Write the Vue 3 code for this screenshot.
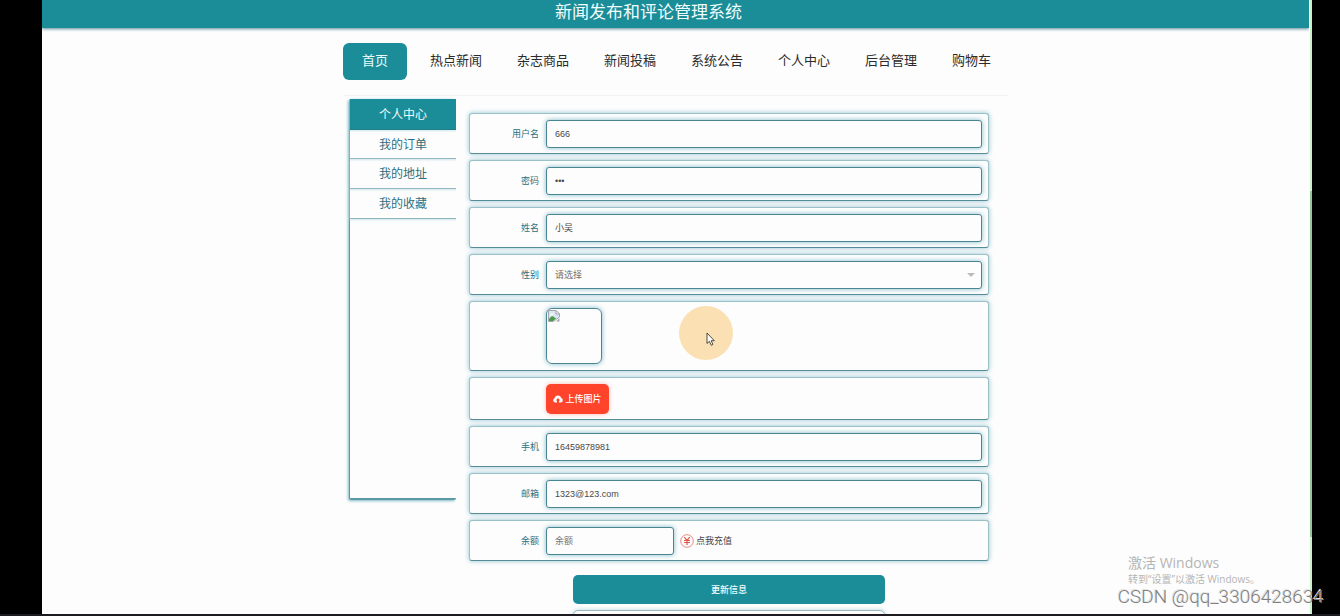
<script setup>
import { ref } from 'vue'

const navItems = ['首页', '热点新闻', '杂志商品', '新闻投稿', '系统公告', '个人中心', '后台管理', '购物车']
const sideItems = ['个人中心', '我的订单', '我的地址', '我的收藏']

const username = ref('666')
const password = ref('666')
const realName = ref('小吴')
const gender = ref('')
const phone = ref('16459878981')
const email = ref('1323@123.com')
const balance = ref('')
</script>

<template>
  <div class="screen">
    <div class="page">
      <div class="content">
        <header class="banner"><h1>新闻发布和评论管理系统</h1></header>

        <div class="container">
          <nav class="nav">
            <a v-for="(item, i) in navItems" :key="item" href="#" :class="{ active: i === 0 }">{{ item }}</a>
          </nav>

          <div class="main">
            <aside class="side">
              <a v-for="(item, i) in sideItems" :key="item" href="#" :class="{ active: i === 0 }">{{ item }}</a>
            </aside>

            <form class="form" @submit.prevent>
              <div class="row">
                <label for="username">用户名</label>
                <input id="username" v-model="username" class="field" type="text" />
              </div>
              <div class="row">
                <label for="password">密码</label>
                <input id="password" v-model="password" class="field" type="password" />
              </div>
              <div class="row">
                <label for="name">姓名</label>
                <input id="name" v-model="realName" class="field" type="text" />
              </div>
              <div class="row">
                <label for="gender">性别</label>
                <div class="select">
                  <select id="gender" v-model="gender" class="field">
                    <option value="">请选择</option>
                    <option value="男">男</option>
                    <option value="女">女</option>
                  </select>
                  <i class="caret"></i>
                </div>
              </div>
              <div class="row indent avatar-row">
                <div class="avatar">
                  <svg width="12" height="12" viewBox="0 0 12 12">
                    <path d="M.5.5h7.5l3.500 3.500v3L8 9.500 5.500 11.500H.5z" fill="#dbe6f5" stroke="#a3a8ad" />
                    <path d="M8 .5v3.500h3.500z" fill="#fff" stroke="#a3a8ad" />
                    <path d="M1 11V9q2.500-4 5-2l2 1.500L5 11z" fill="#4e9a4a" />
                    <path d="M2 5q0-1.500 1.500-1.500Q5 2.500 5.500 4.500V5z" fill="#fff" />
                    <path d="M11.500 8v3.500H8z" fill="#a3a8ad" />
                  </svg>
                </div>
                <div class="pointer">
                  <svg width="9" height="15" viewBox="0 0 9 15">
                    <path d="M1 1v10.500l2.400-2.200 1.800 4 1.700-.8-1.700-3.800H8.300z" fill="#fff" stroke="#3b352e" stroke-width=".9" />
                  </svg>
                </div>
              </div>
              <div class="row indent upload-row">
                <button type="button" class="upload">
                  <svg width="10" height="8" viewBox="0 0 20 16">
                    <path d="M4.500 15A4.500 4.500 0 0 1 3 6.500 7 7 0 0 1 16.500 5.800 4.800 4.800 0 0 1 15.500 15H12V11h2.500L10 6 5.500 11H8v4z" fill="#fff" />
                  </svg>
                  上传图片
                </button>
              </div>
              <div class="row">
                <label for="phone">手机</label>
                <input id="phone" v-model="phone" class="field" type="text" />
              </div>
              <div class="row">
                <label for="email">邮箱</label>
                <input id="email" v-model="email" class="field" type="text" />
              </div>
              <div class="row">
                <label for="balance">余额</label>
                <input id="balance" v-model="balance" class="field short" type="text" placeholder="余额" />
                <a href="#" class="recharge">
                  <svg width="14" height="14" viewBox="0 0 14 14" fill="none" stroke="#e2574c">
                    <circle cx="7" cy="7" r="6.300" stroke-width=".7" />
                    <path d="M4.300 3.200 7 6.500l2.700-3.300M4 6.500h6M4 8.500h6M7 6.500V11" stroke-width="1.200" />
                  </svg>
                  <span>点我充值</span>
                </a>
              </div>
              <div class="actions">
                <button type="submit" class="primary">更新信息</button>
                <div class="next-panel"></div>
              </div>
            </form>
          </div>
        </div>
      </div>
      <div class="scroll"><div class="thumb"></div></div>
    </div>
    <div class="taskbar"></div>

    <div class="activate">
      <p class="big">激活 Windows</p>
      <p class="small">转到“设置”以激活 Windows。</p>
    </div>
    <div class="mark">CSDN @qq_3306428634</div>
  </div>
</template>

<style>
body {
  overflow: hidden;
}
</style>

<style scoped>
* {
  box-sizing: border-box;
}
.screen {
  position: relative;
  display: flex;
  flex-direction: column;
  height: 100vh;
  overflow: hidden;
  background: #000;
  font-family: "Liberation Sans", "Noto Sans CJK SC", sans-serif;
}
.page {
  flex: 1;
  min-height: 0;
  display: flex;
  margin: 0 28px 0 42px;
  background: #fdfdfd;
}
.content {
  flex: 1;
  min-width: 0;
  overflow: hidden;
}
.scroll {
  width: 3px;
  padding-top: 191px;
  background: linear-gradient(90deg, #fdfdfd 1px, #c9f2cb 1px);
}
.thumb {
  height: 346px;
  margin-left: 1px;
  background: #93c796;
}
.taskbar {
  height: 2px;
  background: #1d1b1f;
}
a {
  text-decoration: none;
}
.banner {
  height: 28px;
  padding-right: 54px;
  background: #1b8d99;
  box-shadow: 0 1px 3px #5b8a9a;
  text-align: center;
}
h1 {
  margin: 0;
  font-size: 17px;
  line-height: 26px;
  font-weight: 400;
  color: #effcfd;
}
.container {
  max-width: 665px;
  margin: 0 auto;
}
.nav {
  display: flex;
  gap: 11px;
  padding: 15px 0;
  border-bottom: 1px solid #f3f3f4;
}
.nav a {
  height: 37px;
  padding: 0 12px;
  font-size: 13px;
  line-height: 35px;
  color: #2b2b2b;
  white-space: nowrap;
}
.nav a.active {
  padding: 0 19px;
  border-radius: 6px;
  background: #1b8d99;
  color: #eafafa;
}
.main {
  display: flex;
  align-items: flex-start;
  gap: 13px;
  padding: 3px 19px 0 6px;
}
.side {
  width: 107px;
  height: 401px;
  border: solid #5a99a6;
  border-width: 0 0 2px 1px;
  border-radius: 2px;
  box-shadow: -1px 1px 3px #7fb9c6;
  clip-path: inset(-4px 0 -4px -4px);
}
.side a {
  display: block;
  height: 29px;
  border-bottom: 1px solid #8fb5bf;
  box-shadow: 0 1px 2px #cfe5ea;
  font-size: 12px;
  line-height: 30px;
  text-align: center;
  color: #2d6f80;
}
.side a + a + a {
  height: 30px;
}
.side a.active {
  height: 31px;
  border-color: #157583;
  background: #1b8d99;
  line-height: 32px;
  color: #effcfd;
}
.form {
  flex: 1;
  display: flex;
  flex-direction: column;
  gap: 6px;
  padding-top: 14px;
}
.row {
  position: relative;
  display: flex;
  align-items: center;
  min-height: 41px;
  padding: 5px 6px 5px 0;
  border: 1px solid #9cc0c8;
  border-bottom-color: #568b98;
  border-radius: 3px;
  background: #fdfdfd;
  box-shadow: 0 0 5px #8fc3d0;
}
.row label {
  flex: none;
  width: 76px;
  padding-right: 7px;
  font-size: 9px;
  text-align: right;
  color: #2b6f80;
}
.indent {
  padding-left: 76px;
}
.field {
  flex: 1;
  width: 100%;
  min-width: 0;
  height: 28px;
  margin: 0;
  padding: 0 8px;
  border: 1px solid #4a8594;
  border-radius: 3px;
  outline: none;
  appearance: none;
  background: #fdfdfd;
  box-shadow: 0 0 5px #7fbac8;
  font-family: inherit;
  font-size: 9px;
  color: #484848;
}
.field::placeholder {
  color: #777;
}
select.field {
  color: #707070;
}
.short {
  flex: none;
  width: 128px;
}
.select {
  position: relative;
  flex: 1;
  display: flex;
}
.caret {
  position: absolute;
  right: 7px;
  top: 12px;
  border: 4px solid transparent;
  border-top-color: #bbb;
  border-bottom: 0;
  pointer-events: none;
}
.avatar-row {
  min-height: 70px;
}
.avatar {
  width: 56px;
  height: 56px;
  padding: 1px;
  border: 1px solid #4a8594;
  border-radius: 6px;
  box-shadow: 0 0 5px #7fbac8;
}
.avatar svg {
  display: block;
}
.pointer {
  position: absolute;
  left: 209px;
  top: 4px;
  width: 54px;
  height: 54px;
  padding: 26px 0 0 27px;
  border-radius: 50%;
  background: #fbe0b3;
}
.pointer svg {
  display: block;
}
.upload-row {
  min-height: 43px;
}
.upload {
  display: flex;
  align-items: center;
  justify-content: center;
  gap: 2px;
  width: 63px;
  height: 30px;
  padding: 0;
  border: 0;
  border-radius: 5px;
  background: #ff442b;
  box-shadow: 0 0 4px #ffb9ad;
  font-family: inherit;
  font-size: 9px;
  font-weight: 500;
  color: #fff;
}
.recharge {
  display: flex;
  align-items: center;
  gap: 2px;
  padding-left: 6px;
  font-size: 9px;
  color: #444;
}
.actions {
  display: flex;
  flex-direction: column;
  gap: 6px;
  width: 60%;
  margin: 8px auto 0;
}
.primary {
  height: 29px;
  border: 0;
  border-radius: 5px;
  background: #1b8d99;
  font-family: inherit;
  font-size: 9px;
  font-weight: 500;
  color: #f0fbfc;
}
.next-panel {
  height: 29px;
  border: 1px solid #9cb9c0;
  border-radius: 5px;
  background: #fdfdfd;
  box-shadow: 0 0 4px #b5d6dd;
}
.activate {
  position: absolute;
  right: 79px;
  bottom: 30px;
  width: 133px;
  color: #b5b5b5;
  font-family: "Open Sans", "Noto Sans CJK SC", sans-serif;
  white-space: nowrap;
}
.activate p {
  margin: 0;
}
.big {
  font-size: 14px;
  line-height: 18px;
}
.small {
  font-size: 10px;
  line-height: 14px;
}
.mark {
  position: absolute;
  right: 16px;
  bottom: 7px;
  font-family: Roboto, sans-serif;
  font-size: 19px;
  font-weight: 300;
  line-height: 24px;
  color: #808080;
  text-shadow: -1px -1px 0 #e2e2e2;
}
</style>
